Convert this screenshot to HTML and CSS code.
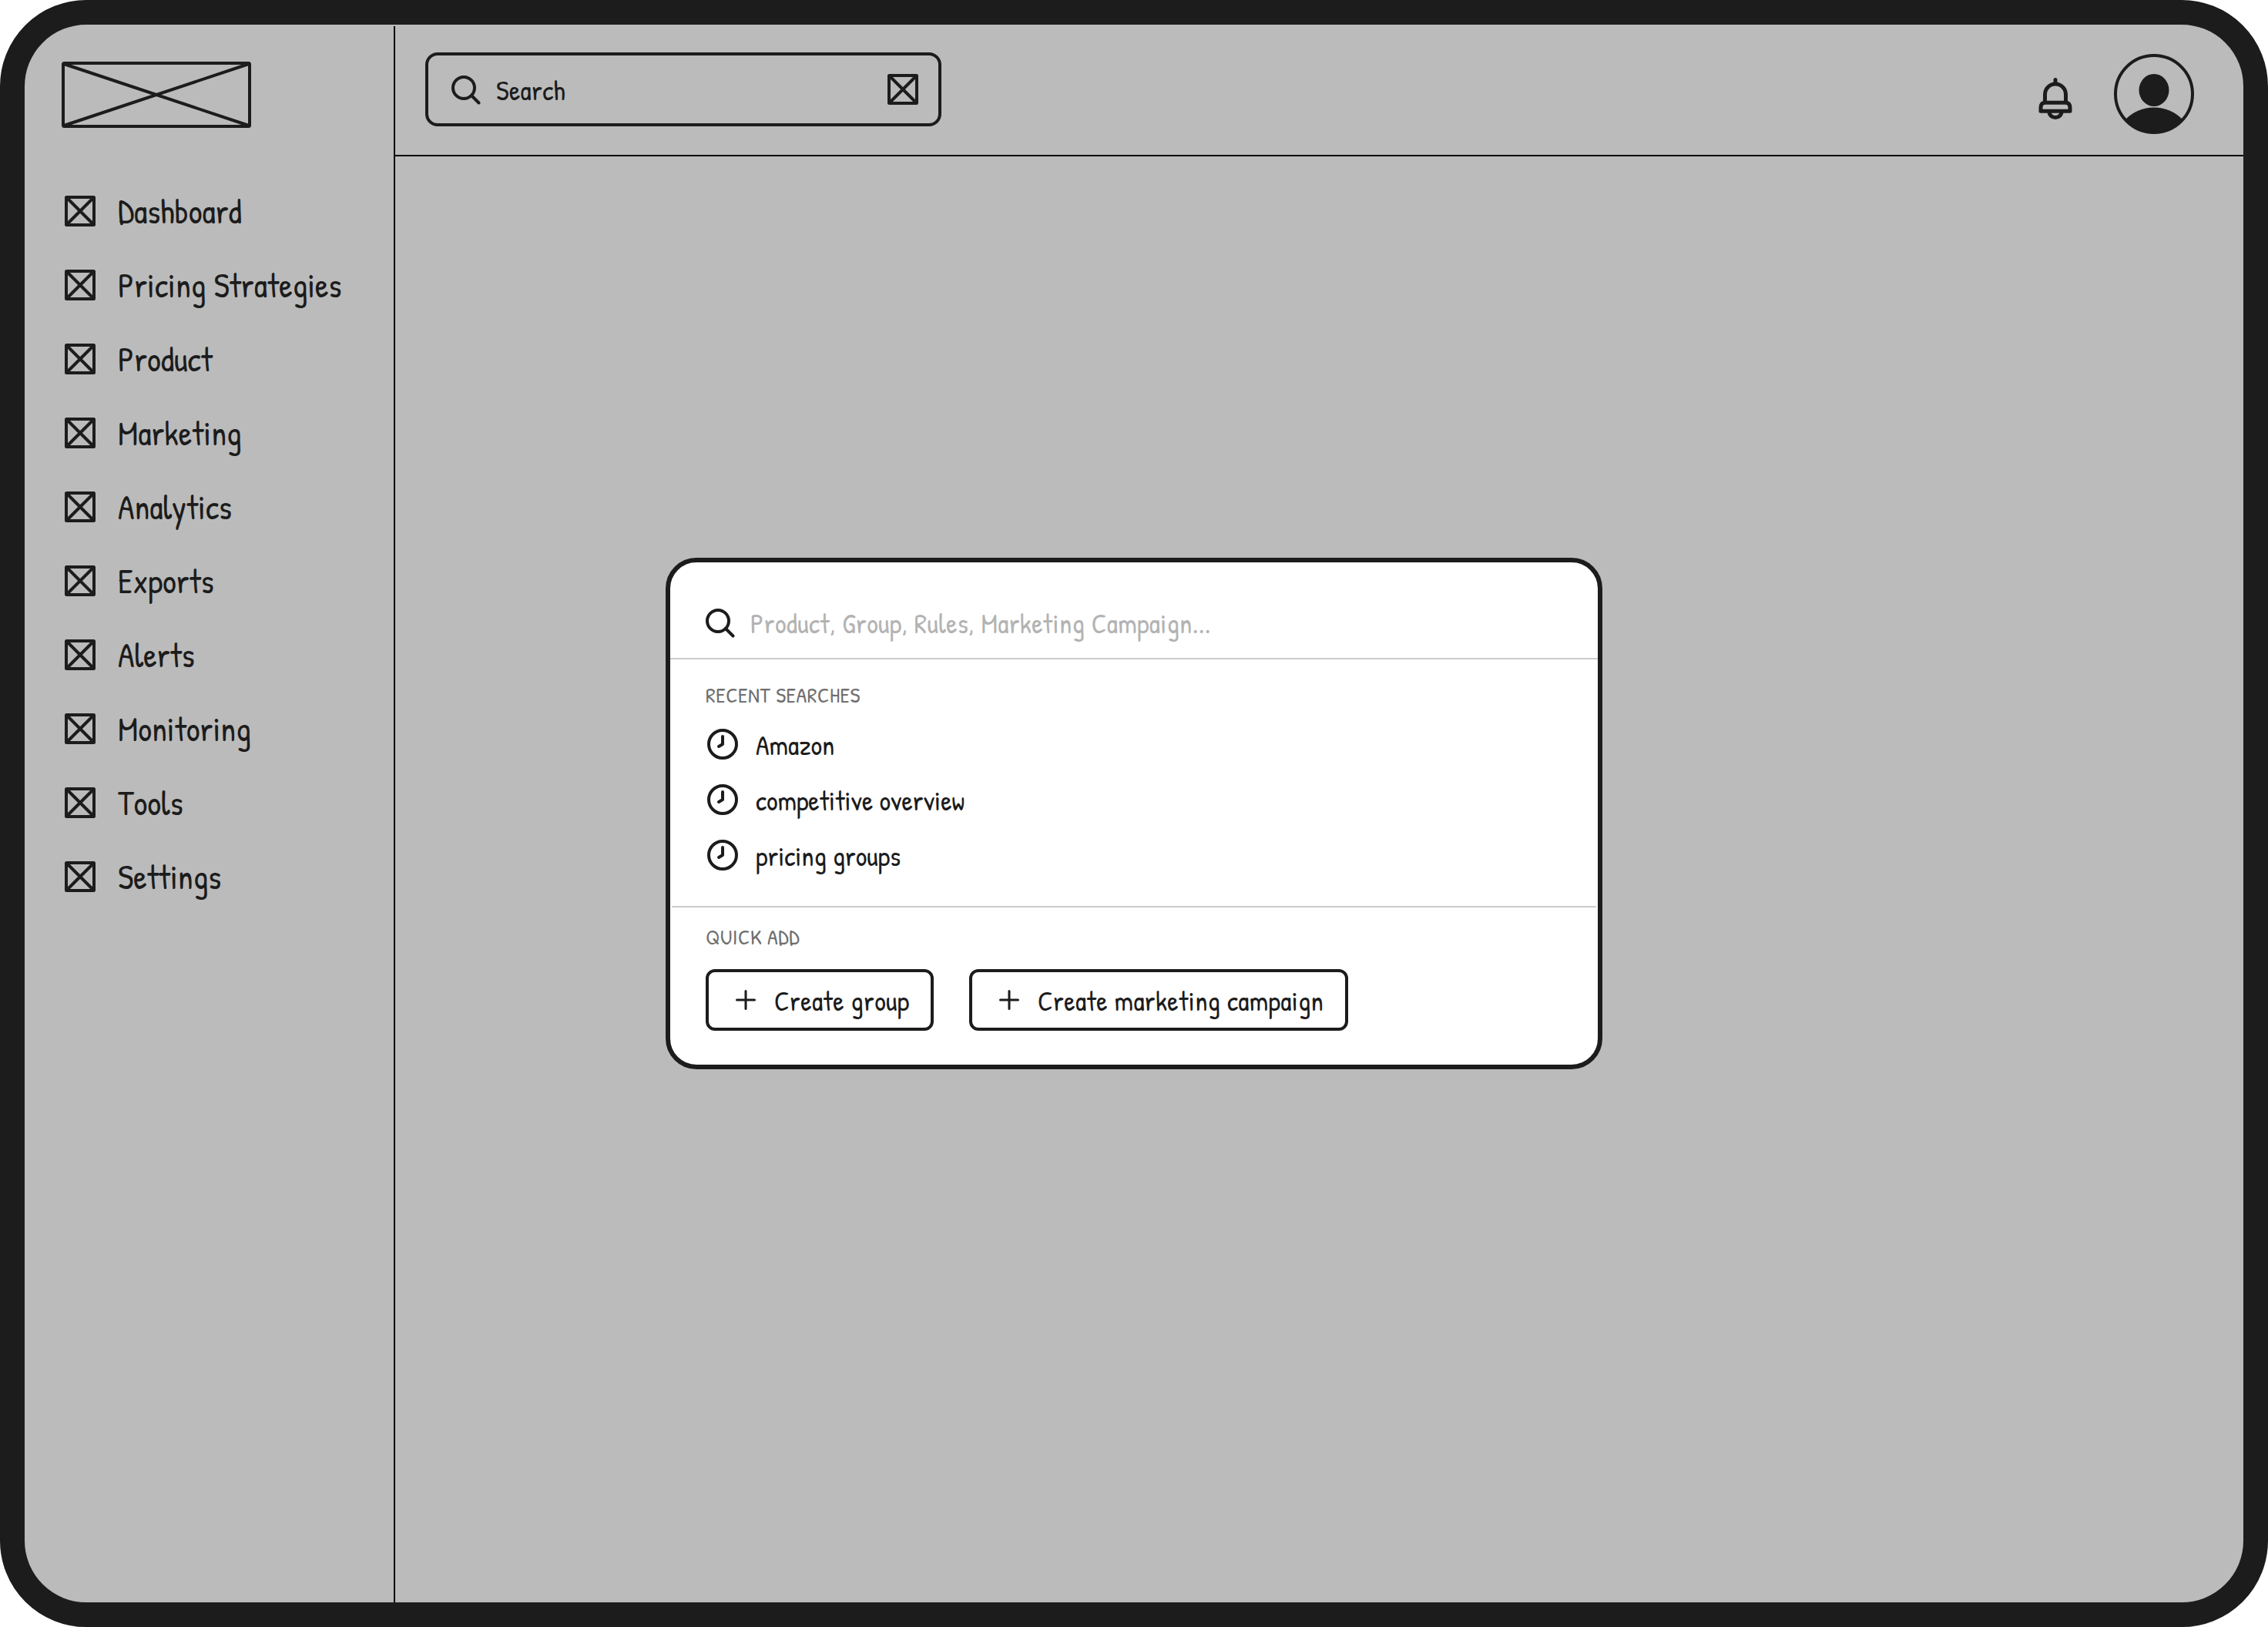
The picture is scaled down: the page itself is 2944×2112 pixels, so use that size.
FILE: index.html
```html
<!DOCTYPE html>
<html lang="en">
<head>
    <meta charset="UTF-8">
    <meta name="viewport" content="width=device-width, initial-scale=1.0">
    <title>Search</title>
    <link rel="stylesheet" href="styles.css">
</head>
<body>

<!-- Shared icons -->
<svg class="icon-defs" width="0" height="0">
    <symbol id="icon-box" viewBox="0 0 40 40">
        <rect x="2" y="2" width="36" height="36" rx="0.5"/>
        <path d="M3 3L37 37M37 3L3 37"/>
    </symbol>
    <symbol id="icon-search" viewBox="0 0 40 40">
        <circle cx="18" cy="18" r="14"/>
        <path d="M28 28L37.5 37.5"/>
    </symbol>
    <symbol id="icon-clock" viewBox="0 0 40 40">
        <circle cx="20" cy="20" r="18"/>
        <path d="M20 10V20L15 23"/>
    </symbol>
    <symbol id="icon-plus" viewBox="0 0 28 28">
        <path d="M14 2.5V25.5M2.5 14H25.5"/>
    </symbol>
</svg>

<div class="frame">
    <aside class="sidebar">
        <svg class="icon logo" viewBox="0 0 246 86">
            <rect x="2" y="2" width="242" height="82" rx="1.5"/>
            <path d="M3 3L243 83M243 3L3 83"/>
        </svg>
        <ul class="nav">
            <li><svg class="icon"><use href="#icon-box"/></svg><span class="label">Dashboard</span></li>
            <li><svg class="icon"><use href="#icon-box"/></svg><span class="label">Pricing Strategies</span></li>
            <li><svg class="icon"><use href="#icon-box"/></svg><span class="label">Product</span></li>
            <li><svg class="icon"><use href="#icon-box"/></svg><span class="label">Marketing</span></li>
            <li><svg class="icon"><use href="#icon-box"/></svg><span class="label">Analytics</span></li>
            <li><svg class="icon"><use href="#icon-box"/></svg><span class="label">Exports</span></li>
            <li><svg class="icon"><use href="#icon-box"/></svg><span class="label">Alerts</span></li>
            <li><svg class="icon"><use href="#icon-box"/></svg><span class="label">Monitoring</span></li>
            <li><svg class="icon"><use href="#icon-box"/></svg><span class="label">Tools</span></li>
            <li><svg class="icon"><use href="#icon-box"/></svg><span class="label">Settings</span></li>
        </ul>
    </aside>

    <main class="main">
        <header class="topbar">
            <div class="search-box">
                <svg class="icon"><use href="#icon-search"/></svg>
                <span class="label">Search</span>
                <svg class="icon"><use href="#icon-box"/></svg>
            </div>
            <div class="user-area">
                <svg class="icon bell" viewBox="0 0 44 56">
                    <path d="M22 3.5V8M8.5 32V22.5A13.5 13.5 0 0 1 35.5 22.5V32"/>
                    <path d="M9 33.3H35Q41 33.3 41 40V44.3H3V40Q3 33.3 9 33.3Z"/>
                    <path d="M14 45A8 7.5 0 0 0 30 45"/>
                </svg>
                <svg class="icon avatar" viewBox="0 0 104 104">
                    <circle cx="52" cy="52" r="50"/>
                    <ellipse class="fill" cx="52" cy="47" rx="19.5" ry="21"/>
                    <path class="fill" d="M15 85A52 52 0 0 1 89 85A51 51 0 0 1 15 85Z"/>
                </svg>
            </div>
        </header>
    </main>
</div>

<!-- Search dialog -->
<div class="modal">
    <div class="modal-search">
        <svg class="icon"><use href="#icon-search"/></svg>
        <span class="label placeholder">Product, Group, Rules, Marketing Campaign...</span>
    </div>
    <section class="recent">
        <h2>RECENT SEARCHES</h2>
        <ul>
            <li><svg class="icon"><use href="#icon-clock"/></svg><span class="label">Amazon</span></li>
            <li><svg class="icon"><use href="#icon-clock"/></svg><span class="label">competitive overview</span></li>
            <li><svg class="icon"><use href="#icon-clock"/></svg><span class="label">pricing groups</span></li>
        </ul>
    </section>
    <section class="quick-add">
        <h2>QUICK ADD</h2>
        <div class="actions">
            <button class="btn-group"><svg class="icon plus"><use href="#icon-plus"/></svg><span class="label">Create group</span></button>
            <button class="btn-campaign"><svg class="icon plus"><use href="#icon-plus"/></svg><span class="label">Create marketing campaign</span></button>
        </div>
    </section>
</div>

</body>
</html>
```
FILE: styles.css
```css
* {
    box-sizing: border-box;
    margin: 0;
    padding: 0;
}

body {
    font-family: "Patrick Hand", Lato, sans-serif;
    font-size: 36px;
    letter-spacing: 0.01em;
    color: #1c1c1c;
    background: #fff;
    height: 100vh;
}

ul {
    list-style: none;
}

.icon-defs {
    position: absolute;
}

.icon {
    display: block;
    flex: none;
    width: 40px;
    height: 40px;
    fill: none;
    stroke: #1c1c1c;
    stroke-width: 4;
    stroke-linecap: round;
    stroke-linejoin: round;
}

.icon .fill {
    fill: #1c1c1c;
    stroke: none;
}

.label {
    white-space: nowrap;
}

/* Frame */
.frame {
    display: flex;
    width: 2944px;
    height: 2112px;
    border: 32px solid #1c1c1c;
    border-radius: 112px;
    background: #bbb;
}

.sidebar {
    width: 481px;
    margin-top: 2px;
    padding: 46px 0 0 48px;
    border-right: 2px solid #000;
}

.logo {
    width: 246px;
    height: 86px;
}

.nav {
    padding: 60px 0 0 4px;
}

.nav li {
    display: flex;
    align-items: center;
    height: 96px;
    font-size: 44px;
    letter-spacing: 0;
}

.nav .label {
    margin-left: 29px;
    padding-bottom: 1px;
}

/* Top bar */
.main {
    flex: 1;
}

.topbar {
    display: flex;
    justify-content: space-between;
    height: 171px;
    padding: 36px 64px 0 39px;
    border-bottom: 2px solid #000;
}

.search-box {
    display: flex;
    align-items: center;
    width: 670px;
    height: 96px;
    padding: 0 26px 0 28px;
    border: 4px solid #1c1c1c;
    border-radius: 16px;
}

.search-box .label {
    flex: 1;
    margin-left: 20px;
}

.user-area {
    display: flex;
    gap: 54px;
    padding-top: 2px;
}

.bell {
    width: 44px;
    height: 56px;
    margin-top: 30px;
    stroke-width: 5;
}

.avatar {
    width: 104px;
    height: 104px;
}

/* Modal */
.modal {
    position: absolute;
    left: 864px;
    top: 724px;
    width: 1216px;
    height: 664px;
    border: 6px solid #1c1c1c;
    border-radius: 40px;
    background: #fff;
}

.modal-search {
    display: flex;
    height: 126px;
    padding: 58px 0 0 44px;
    border-bottom: 2px solid #ccc;
}

.modal-search .label {
    margin: -4px 0 0 20px;
}

.placeholder {
    color: #b3b3b3;
}

h2 {
    font-size: 28px;
    font-weight: normal;
    line-height: 30px;
    letter-spacing: 0.02em;
    color: #6f6f6f;
}

.recent {
    height: 322px;
    margin: 0 2px;
    padding: 31px 0 0 44px;
    border-bottom: 2px solid #ccc;
}

.recent ul {
    padding-top: 13px;
}

.recent li {
    display: flex;
    align-items: center;
    height: 72px;
    padding-left: 2px;
    letter-spacing: 0;
}

.recent li .label {
    margin-left: 23px;
    padding-top: 1px;
}

.quick-add {
    padding: 23px 0 0 46px;
}

.actions {
    display: flex;
    gap: 46px;
    padding-top: 27px;
}

.actions button {
    display: flex;
    align-items: center;
    height: 80px;
    padding-left: 34px;
    border: 4px solid #1c1c1c;
    border-radius: 12px;
    background: none;
    font: inherit;
    letter-spacing: inherit;
    color: inherit;
}

.actions .label {
    margin-left: 23px;
}

.btn-group {
    width: 296px;
}

.btn-campaign {
    width: 492px;
}

.plus {
    width: 28px;
    height: 28px;
    stroke-width: 3;
}
```
